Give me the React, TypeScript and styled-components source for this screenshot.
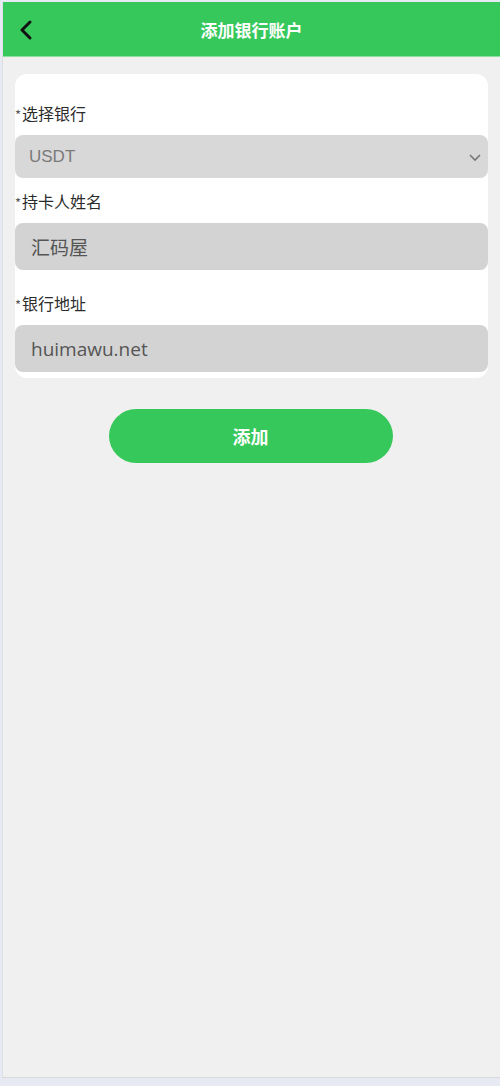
import React from "react";
import styled, { createGlobalStyle } from "styled-components";

const GlobalStyle = createGlobalStyle`
    html, body {
        margin: 0;
        padding: 0;
        background: #e7eaf2;
        font-family: "Noto Sans CJK SC", "Open Sans", sans-serif;
    }
`

const Frame = styled.div`
    margin: 2px 0 0 2px;
    width: 498px;
    height: 1076px;
    background: #f0f0f0;
    border-left: 1px solid #dcdfe6;
    border-bottom: 1px solid #d9d9d9;
    box-sizing: border-box;
    display: flex;
    flex-direction: column;
`

const Header = styled.div`
    height: 54px;
    background: #37c85c;
    border-bottom: 1px solid #8be0a0;
    display: flex;
    align-items: center;
    justify-content: center;
    position: relative;
    flex-shrink: 0;
`

const Title = styled.div`
    color: #fff;
    font-size: 17px;
    font-weight: 700;
`

const BackButton = styled.div`
    position: absolute;
    left: 14px;
    top: 17px;
    width: 20px;
    height: 22px;
`

const Card = styled.div`
    margin: 17px 12px 0 12px;
    background: #fff;
    border-radius: 12px;
    padding: 28px 0 6px;
    display: flex;
    flex-direction: column;
`

const Label = styled.div<{ $gap?: number }>`
    font-size: 16px;
    color: #2b2b2b;
    line-height: 22px;
    margin-top: ${p => p.$gap ?? 0}px;
    margin-bottom: 11px;
    display: flex;
    align-items: center;
`

const Star = styled.span`
    font-size: 13px;
    color: #555;
    margin-right: 1px;
    position: relative;
    top: 2px;
`

const SelectBox = styled.div`
    height: 43px;
    background: #d8d8d8;
    border-radius: 8px;
    display: flex;
    align-items: center;
    justify-content: space-between;
    padding: 0 6px 0 14px;
    font-family: "Liberation Sans", Arial, sans-serif;
    font-size: 17px;
    color: #7a7a7a;
    margin-bottom: 12px;
`

const Field = styled.div`
    height: 47px;
    background: #d3d3d3;
    border-radius: 8px;
    display: flex;
    align-items: center;
    padding: 0 16px;
    font-size: 19px;
    color: #555;
    font-family: "Open Sans", "Noto Sans CJK SC", sans-serif;
`

const SubmitButton = styled.button`
    align-self: center;
    margin: 31px 0 0 0;
    width: 284px;
    height: 54px;
    border: none;
    border-radius: 27px;
    background: #37c85c;
    color: #fff;
    font-size: 18px;
    font-weight: 700;
    font-family: "Noto Sans CJK SC", sans-serif;
    position: relative;
    left: -1px;
`

export default function App() {
    return (
        <>
            <GlobalStyle />
            <Frame>
                <Header>
                    <BackButton>
                        <svg width="20" height="22" viewBox="0 0 20 22">
                            <path d="M13 3 L5 11 L13 19" fill="none" stroke="#111" strokeWidth="3" strokeLinecap="round" strokeLinejoin="round" />
                        </svg>
                    </BackButton>
                    <Title>添加银行账户</Title>
                </Header>
                <Card>
                    <Label><Star>*</Star>选择银行</Label>
                    <SelectBox>
                        <span>USDT</span>
                        <svg width="14" height="10" viewBox="0 0 14 10">
                            <path d="M2 3 L7 8 L12 3" fill="none" stroke="#777" strokeWidth="1.6" />
                        </svg>
                    </SelectBox>
                    <Label><Star>*</Star>持卡人姓名</Label>
                    <Field>汇码屋</Field>
                    <Label $gap={22}><Star>*</Star>银行地址</Label>
                    <Field>huimawu.net</Field>
                </Card>
                <SubmitButton>添加</SubmitButton>
            </Frame>
        </>
    )
}
